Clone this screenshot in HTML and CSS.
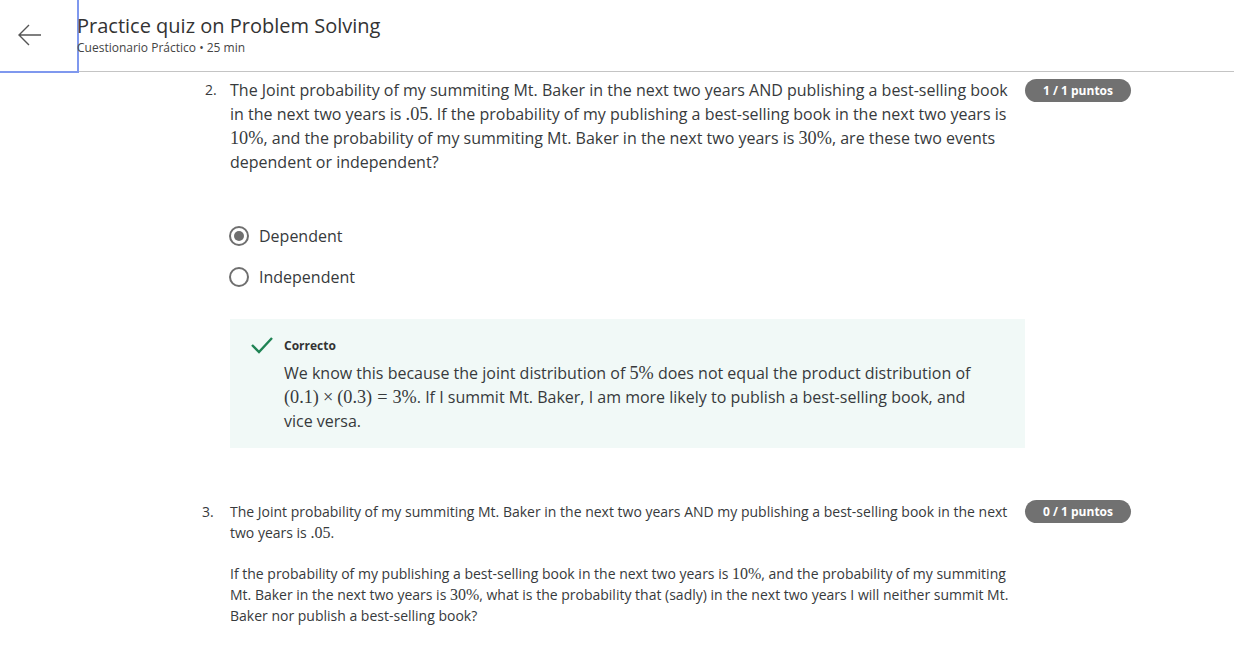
FILE: index.html
```html
<!DOCTYPE html>
<html>
<head>
<meta charset="utf-8">
<link rel="stylesheet" href="styles.css">
</head>
<body>
<header class="topbar">
  <button class="back" aria-label="Back">
    <svg width="26" height="26" viewBox="0 0 26 26"><path d="M24 13H2M12 3L2 13l10 10" fill="none" stroke="#555" stroke-width="1.4"/></svg>
  </button>
  <div class="titles">
    <h1 class="title">Practice quiz on Problem Solving</h1>
    <div class="sub">Cuestionario Práctico • 25 min</div>
  </div>
</header>
<main class="content">
  <section class="q q2">
    <div class="num">2.</div>
    <div class="body">
      <p class="prompt">The Joint probability of my summiting Mt. Baker in the next two years AND publishing a best-selling book in the next two years is <span class="m">.05</span>. If the probability of my publishing a best-selling book in the next two years is <span class="m">10%</span>, and the probability of my summiting Mt. Baker in the next two years is <span class="m">30%</span>, are these two events dependent or independent?</p>
      <div class="options">
        <label class="opt"><span class="radio checked"></span>Dependent</label>
        <label class="opt"><span class="radio"></span>Independent</label>
      </div>
      <div class="feedback">
        <svg class="check" width="24" height="20" viewBox="0 0 24 20"><path d="M2 10l7 7L22 3" fill="none" stroke="#1f8354" stroke-width="2.4"/></svg>
        <div class="fb-text">
          <div class="fb-title">Correcto</div>
          <p>We know this because the joint distribution of <span class="m">5%</span> does not equal the product distribution of <span class="m">(0.1)<span class="op">×</span>(0.3)<span class="op rel">=</span>3%</span>. If I summit Mt. Baker, I am more likely to publish a best-selling book, and vice versa.</p>
        </div>
      </div>
    </div>
    <div class="badge">1 / 1 puntos</div>
  </section>
  <section class="q q3">
    <div class="num">3.</div>
    <div class="body">
      <p class="prompt">The Joint probability of my summiting Mt. Baker in the next two years AND my publishing a best-selling book in the next two years is <span class="m">.05</span>.</p>
      <p class="prompt">If the probability of my publishing a best-selling book in the next two years is <span class="m">10%</span>, and the probability of my summiting Mt. Baker in the next two years is <span class="m">30%</span>, what is the probability that (sadly) in the next two years I will neither summit Mt. Baker nor publish a best-selling book?</p>
    </div>
    <div class="badge">0 / 1 puntos</div>
  </section>
</main>
</body>
</html>
```
FILE: styles.css
```css
* { box-sizing: border-box; }
html, body { margin: 0; padding: 0; background: #fff; }
body {
  font-family: "Open Sans", "Liberation Sans", sans-serif;
  color: #373a3c;
  overflow: hidden;
}
.topbar {
  display: flex;
  align-items: stretch;
  height: 72px;
  border-bottom: 1px solid #c4c4c4;
}
.back {
  width: 79px;
  height: 73px;
  margin: 0;
  background: #fff;
  border: none;
  border-right: 2px solid #7f98ee;
  border-bottom: 2px solid #7f98ee;
  display: flex;
  align-items: center;
  justify-content: flex-start;
  padding: 0 0 2px 17px;
}
.titles {
  padding-top: 12px;
  margin-left: -2px;
}
.title {
  margin: 0;
  font-size: 20px;
  font-weight: 400;
  line-height: 28px;
  color: #333;
}
.sub {
  font-size: 12px;
  line-height: 16px;
  color: #444;
}
.content {
  padding-left: 202px;
  width: 1132px;
}
.q {
  display: flex;
  align-items: flex-start;
}
.num {
  width: 28px;
  flex: none;
}
.body { width: 795px; flex: none; }
.badge {
  width: 106px;
  height: 23px;
  border-radius: 12px;
  background: #717171;
  color: #fff;
  font-size: 12px;
  font-weight: 700;
  line-height: 23px;
  text-align: center;
  flex: none;
}
.q2 { margin-top: 6px; }
.q2 .num { font-size: 14px; line-height: 24px; padding-left: 3px; }
.q2 .prompt {
  margin: 0;
  font-size: 16px;
  line-height: 24px;
  width: 785px;
}
.q2 .badge { margin-top: 1px; }
.m {
  font-family: "Liberation Serif", "DejaVu Serif", serif;
  font-size: 1.14em;
  line-height: 1;
}
.op { margin: 0 4px; }
.op.rel { margin: 0 5px; }
.options {
  margin-top: 50px;
  display: flex;
  flex-direction: column;
  gap: 17px;
}
.opt {
  display: flex;
  align-items: center;
  font-size: 16px;
  line-height: 24px;
}
.radio {
  width: 20px;
  height: 20px;
  border: 2px solid #6f6f6f;
  border-radius: 50%;
  margin-right: 10px;
  margin-left: -1px;
  display: flex;
  align-items: center;
  justify-content: center;
}
.radio.checked::after {
  content: "";
  width: 10px;
  height: 10px;
  border-radius: 50%;
  background: #6f6f6f;
}
.feedback {
  margin-top: 30px;
  background: #f1f9f7;
  display: flex;
  padding: 16px 20px 15px 20px;
  min-height: 128px;
}
.check { flex: none; margin-right: 10px; }
.fb-title {
  font-size: 12px;
  font-weight: 700;
  line-height: 22px;
  color: #333;
}
.fb-text p {
  margin: 4px 0 0;
  font-size: 16px;
  line-height: 24px;
  width: 708px;
}
.q3 { margin-top: 53px; }
.q3 .num { font-size: 14px; line-height: 21px; }
.q3 .prompt {
  margin: 0 0 20px;
  font-size: 14px;
  line-height: 21px;
  width: 785px;
}
.q3 .badge { margin-top: -1px; }
```
